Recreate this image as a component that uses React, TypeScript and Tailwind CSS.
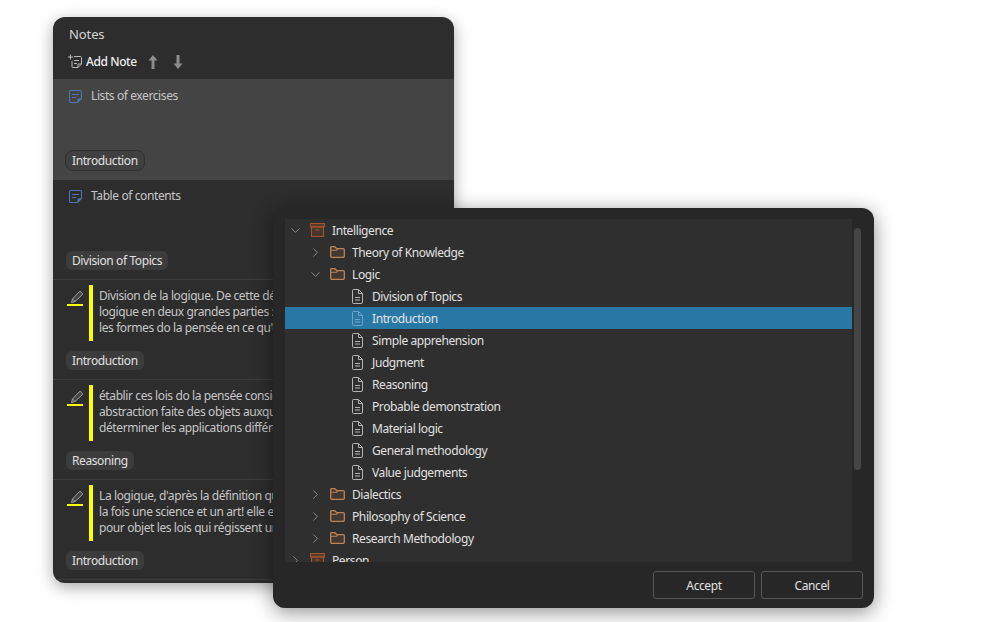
import React from 'react';
import { ChevronDown, ChevronRight } from 'lucide-react';

const font = "font-['Noto_Sans','Open_Sans',sans-serif]";

const NoteIcon = () => (
  <svg width="15" height="15" viewBox="0 0 15 15" fill="none" className="shrink-0 text-[#4f74b0]">
    <path d="M2.500 1.500h10a1 1 0 0 1 1 1v7l-4 4h-7a1 1 0 0 1-1-1v-10a1 1 0 0 1 1-1z" stroke="currentColor" strokeWidth="1.1" />
    <path d="M4 5.500h7M4 8.500h4" stroke="currentColor" strokeWidth="1.1" />
    <path d="M9.500 13.500v-3a1 1 0 0 1 1-1h3z" fill="currentColor" />
  </svg>
);

const AddNoteIcon = () => (
  <svg width="14" height="15" viewBox="0 0 14 15" fill="none" className="shrink-0 text-[#b9b9b9]">
    <path d="M6 2.500h6.500a1 1 0 0 1 1 1v6.500l-3.500 3.500h-5a1 1 0 0 1-1-1v-5.500" stroke="currentColor" strokeWidth="1" />
    <path d="M6 6.500h5M6 9.500h3" stroke="currentColor" strokeWidth="1" />
    <path d="M10 13.500v-3.500h3.500" stroke="currentColor" strokeWidth="1" />
    <path d="M2.500 0.500v5M0 3h5" stroke="currentColor" strokeWidth="1" />
  </svg>
);

const ArrowUp = () => (
  <svg width="12" height="16" viewBox="0 0 12 16" className="text-[#8c8c8c]">
    <path d="M6 1l4.500 5.500h-3v8.500h-3v-8.500h-3z" fill="currentColor" />
  </svg>
);

const ArrowDown = () => (
  <svg width="12" height="16" viewBox="0 0 12 16" className="text-[#8c8c8c]">
    <path d="M6 15l4.500-5.500h-3v-8.500h-3v8.500h-3z" fill="currentColor" />
  </svg>
);

const PenIcon = () => (
  <svg width="14" height="14" viewBox="0 0 14 14" fill="none" className="text-[#a0a0a0]">
    <path d="M1.500 12.500l1-3.500 6.500-7a1.500 1.500 0 0 1 2.200 0l.8.800a1.500 1.500 0 0 1 0 2.200l-7 6.500z" fill="currentColor" fillOpacity="0.2" stroke="currentColor" strokeWidth="1" />
    <path d="M2.500 9l2.500 2.500" stroke="currentColor" strokeWidth="1" />
  </svg>
);

const ArchiveIcon = () => (
  <svg width="15" height="14" viewBox="0 0 15 14" fill="none" className="shrink-0 text-[#a4552b]">
    <rect x="0.500" y="0.500" width="14" height="3.500" fill="currentColor" fillOpacity="0.35" stroke="currentColor" />
    <rect x="1.500" y="4" width="12" height="9.500" fill="currentColor" fillOpacity="0.2" stroke="currentColor" />
    <path d="M5.500 7h4" stroke="currentColor" />
  </svg>
);

const FolderIcon = () => (
  <svg width="15" height="12" viewBox="0 0 15 12" fill="none" className="shrink-0 text-[#c08354]">
    <path d="M1.200 .7h3.600l2 2h6.500a1 1 0 0 1 1 1v6.600a1 1 0 0 1-1 1h-11.600a1 1 0 0 1-1-1v-9a.6.6 0 0 1 .5-.6z" fill="currentColor" fillOpacity="0.12" stroke="currentColor" strokeWidth="1.300" />
    <path d="M.7 4.200h6l1-1.500" stroke="currentColor" strokeWidth="1.100" />
  </svg>
);

const DocIcon = ({ selected }: { selected?: boolean }) => (
  <svg width="11" height="15" viewBox="0 0 11 15" fill="none" className={selected ? 'shrink-0 text-[#6fa3c7]' : 'shrink-0 text-[#b4b4b4]'}>
    <path d="M1.500 .5h5l4 4v8.500a1.500 1.500 0 0 1-1.500 1.500h-7.500a1 1 0 0 1-1-1v-12a1 1 0 0 1 1-1z" stroke="currentColor" />
    <path d="M6.500 .5v4h4M3 8.500h5M3 11h5" stroke="currentColor" />
  </svg>
);

const Tag = ({ label, bordered }: { label: string; bordered?: boolean }) => (
  <span
    className={
      bordered
        ? 'self-start rounded-lg border border-[#2f2f2f] bg-[#404040] px-[6px] h-[21px] -ml-px flex items-center text-xs text-[#e0e0e0]'
        : 'self-start rounded-md bg-[#3c3c3c] px-[6px] h-[19px] flex items-center text-xs text-[#e0e0e0]'
    }
  >
    {label}
  </span>
);

const HighlightRow = ({ lines, tag }: { lines: string[]; tag: string }) => (
  <div className="h-[100px] border-b border-[#3e3e3e] flex flex-col pl-[13px] pt-[5px]">
    <div className="flex h-[56px]">
      <div className="w-[23px] flex flex-col">
        <div className="h-[19px] pl-[4px] pt-[5px] flex">
          <PenIcon />
        </div>
        <div className="w-[16px] ml-px h-[2px] bg-[#ffff00]" />
      </div>
      <div className="w-[4px] bg-[#ffff00]" />
      <div className="ml-[6px] pt-[3px] text-xs leading-[16px] text-[#c6c6c6] whitespace-nowrap">
        {lines.map((l) => (
          <div key={l}>{l}</div>
        ))}
      </div>
    </div>
    <div className="mt-[10px] flex">
      <Tag label={tag} />
    </div>
  </div>
);

const TreeRow = ({
  depth,
  label,
  kind,
  open,
  selected,
}: {
  depth: 0 | 1 | 2;
  label: string;
  kind: 'archive' | 'folder' | 'doc';
  open?: boolean;
  selected?: boolean;
}) => {
  const indent = depth === 0 ? 'pl-0' : depth === 1 ? 'pl-[20px]' : 'pl-[40px]';
  return (
    <div className={`h-[22px] shrink-0 flex items-center text-xs ${indent} ${selected ? 'bg-[#2878a6] text-[#e4e4e4]' : 'text-[#e0e0e0]'}`}>
      <div className="w-5 flex justify-center text-[#a0a0a0]">
        {kind !== 'doc' && (open ? <ChevronDown size={15} strokeWidth={1.25} /> : <ChevronRight size={15} strokeWidth={1.25} />)}
      </div>
      <div className="w-[16px] ml-[4px] flex justify-center">
        {kind === 'archive' && <ArchiveIcon />}
        {kind === 'folder' && <FolderIcon />}
        {kind === 'doc' && <DocIcon selected={selected} />}
      </div>
      <span className="ml-[7px] pt-[2px] whitespace-nowrap">{label}</span>
    </div>
  );
};

export default function App() {
  return (
    <div className={`relative w-[1008px] h-[622px] overflow-hidden bg-white tracking-[-0.4px] ${font}`}>
      {/* notes window */}
      <div className="absolute left-[53px] top-[17px] w-[401px] h-[566px] rounded-xl bg-[#2d2d2d] overflow-hidden shadow-[0_4px_16px_rgba(0,0,0,0.35)] flex flex-col">
        <div className="h-[62px] shrink-0 flex flex-col px-[15px]">
          <div className="h-[34px] pt-[8px] pl-px text-[13px] leading-[18px] tracking-[-0.1px] text-[#d4d4d4]">Notes</div>
          <div className="flex items-center h-[21px]">
            <AddNoteIcon />
            <span className="ml-[4px] text-xs font-medium text-[#ececec]">Add Note</span>
            <div className="ml-[10px]">
              <ArrowUp />
            </div>
            <div className="ml-[13px]">
              <ArrowDown />
            </div>
          </div>
        </div>
        <div className="h-[101px] shrink-0 bg-[#444444] flex flex-col pl-[13px] pt-[10px]">
          <div className="flex items-center h-[14px] text-xs text-[#c6c6c6]">
            <div className="ml-[2px] w-[23px]">
              <NoteIcon />
            </div>
            <span>Lists of exercises</span>
          </div>
          <div className="mt-[47px] flex">
            <Tag label="Introduction" bordered />
          </div>
        </div>
        <div className="h-[100px] shrink-0 border-b border-[#3e3e3e] flex flex-col pl-[13px] pt-[9px]">
          <div className="flex items-center h-[14px] text-xs text-[#c6c6c6]">
            <div className="ml-[2px] w-[23px]">
              <NoteIcon />
            </div>
            <span>Table of contents</span>
          </div>
          <div className="mt-[48px] flex">
            <Tag label="Division of Topics" />
          </div>
        </div>
        <HighlightRow
          lines={['Division de la logique. De cette définition', 'logique en deux grandes parties : la logique', "les formes do la pensée en ce qu'elles ont"]}
          tag="Introduction"
        />
        <HighlightRow
          lines={['établir ces lois do la pensée considérées', 'abstraction faite des objets auxquels elles', 'déterminer les applications différentes']}
          tag="Reasoning"
        />
        <HighlightRow
          lines={["La logique, d'après la définition que nous", 'la fois une science et un art! elle est une', 'pour objet les lois qui régissent un esprit']}
          tag="Introduction"
        />
      </div>

      {/* tree picker dialog */}
      <div className="absolute left-[273px] top-[208px] w-[601px] h-[400px] rounded-xl bg-[#272727] overflow-hidden shadow-[0_4px_20px_rgba(0,0,0,0.45)] flex flex-col">
        <div className="h-[354px] shrink-0 flex pt-[11px] pl-[12px]">
          <div className="w-[567px] h-[343px] bg-[#2f2f2f] overflow-hidden flex flex-col">
            <TreeRow depth={0} kind="archive" open label="Intelligence" />
            <TreeRow depth={1} kind="folder" label="Theory of Knowledge" />
            <TreeRow depth={1} kind="folder" open label="Logic" />
            <TreeRow depth={2} kind="doc" label="Division of Topics" />
            <TreeRow depth={2} kind="doc" selected label="Introduction" />
            <TreeRow depth={2} kind="doc" label="Simple apprehension" />
            <TreeRow depth={2} kind="doc" label="Judgment" />
            <TreeRow depth={2} kind="doc" label="Reasoning" />
            <TreeRow depth={2} kind="doc" label="Probable demonstration" />
            <TreeRow depth={2} kind="doc" label="Material logic" />
            <TreeRow depth={2} kind="doc" label="General methodology" />
            <TreeRow depth={2} kind="doc" label="Value judgements" />
            <TreeRow depth={1} kind="folder" label="Dialectics" />
            <TreeRow depth={1} kind="folder" label="Philosophy of Science" />
            <TreeRow depth={1} kind="folder" label="Research Methodology" />
            <TreeRow depth={0} kind="archive" label="Person" />
          </div>
          <div className="ml-[2px] mt-[9px] w-[7px] h-[242px] rounded-full bg-[#454545]" />
        </div>
        <div className="flex justify-end gap-[6px] pt-[9px] pr-[11px]">
          <button className="w-[102px] h-[28px] rounded-[3px] border border-[#575757] pt-px text-xs text-[#e0e0e0]">Accept</button>
          <button className="w-[102px] h-[28px] rounded-[3px] border border-[#575757] pt-px text-xs text-[#e0e0e0]">Cancel</button>
        </div>
      </div>
    </div>
  );
}
